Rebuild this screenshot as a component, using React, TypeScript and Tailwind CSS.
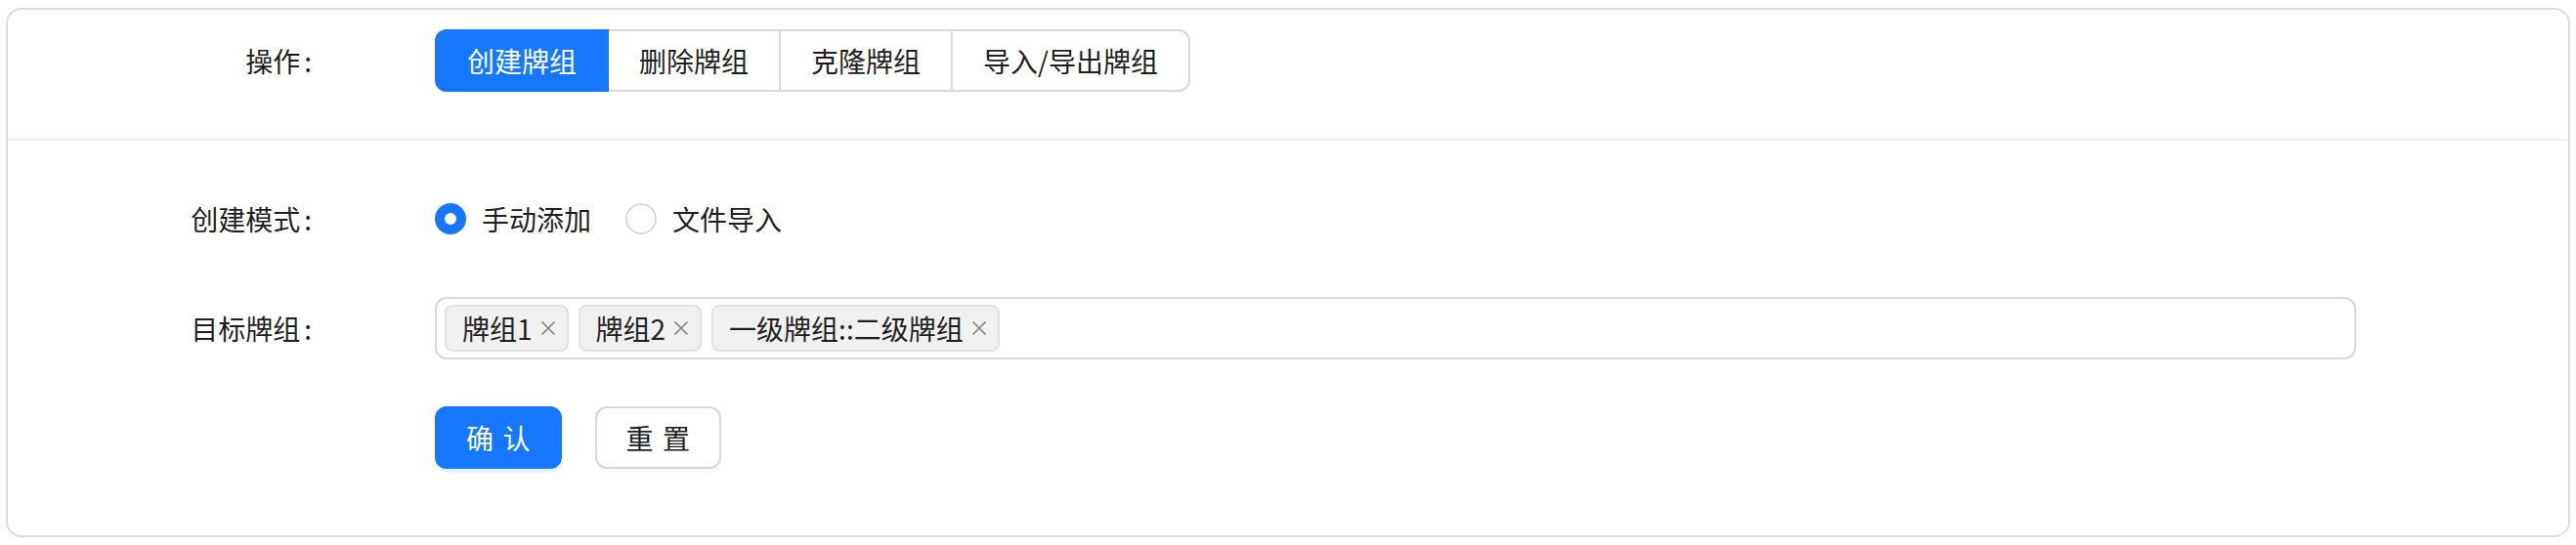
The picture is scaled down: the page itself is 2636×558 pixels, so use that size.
const font = { fontFamily: '"Noto Sans CJK SC", "Noto Sans", sans-serif' };

const ops = ["创建牌组", "删除牌组", "克隆牌组", "导入/导出牌组"];
const tags = ["牌组1", "牌组2", "一级牌组::二级牌组"];

const Label = ({ text }: { text: string }) => (
  <div className="w-[311px] shrink-0 text-right text-[#1f1f1f]">
    {text}
    <span className="ml-[4px]">:</span>
  </div>
);

const CloseIcon = () => (
  <svg width="22" height="22" viewBox="0 0 22 22" className="ml-[5px]">
    <path d="M4.5 4.5 L17.5 17.5 M17.5 4.5 L4.5 17.5" stroke="rgba(0,0,0,0.45)" strokeWidth="1.7" fill="none" />
  </svg>
);

export default function App() {
  return (
    <div className="w-[2636px] h-[558px] bg-white px-[6px] py-[8px] text-[28px] leading-[40px]" style={font}>
      <div className="h-full border-2 border-[#dddddd] rounded-[16px] flex flex-col">
        {/* 操作 */}
        <div className="pt-[20px] pb-[48px] border-b-2 border-[#f0f0f0]">
          <div className="flex items-center h-[64px]">
            <Label text="操作" />
            <div className="ml-[126px] flex">
              {ops.map((op, i) => (
                <button
                  key={op}
                  className={
                    i === 0
                      ? "h-[64px] px-[31px] whitespace-nowrap border-2 border-[#1677ff] bg-[#1677ff] text-white rounded-l-[12px] relative z-10"
                      : i === ops.length - 1
                      ? "h-[64px] px-[31px] whitespace-nowrap border-2 border-[#d9d9d9] bg-white text-[#1f1f1f] -ml-[2px] rounded-r-[12px]"
                      : "h-[64px] px-[31px] whitespace-nowrap border-2 border-[#d9d9d9] bg-white text-[#1f1f1f] -ml-[2px]"
                  }
                >
                  {op}
                </button>
              ))}
            </div>
          </div>
        </div>

        <div className="pt-[48px] flex flex-col gap-[48px]">
          {/* 创建模式 */}
          <div className="flex items-center h-[64px]">
            <Label text="创建模式" />
            <div className="ml-[126px] flex items-center">
              <label className="flex items-center mr-[19px]">
                <span className="w-[32px] h-[32px] rounded-full bg-[#1677ff] flex items-center justify-center">
                  <span className="w-[12px] h-[12px] rounded-full bg-white" />
                </span>
                <span className="px-[16px] text-[#1f1f1f]">手动添加</span>
              </label>
              <label className="flex items-center">
                <span className="w-[32px] h-[32px] rounded-full border-2 border-[#d9d9d9] bg-white" />
                <span className="px-[16px] text-[#1f1f1f]">文件导入</span>
              </label>
            </div>
          </div>

          {/* 目标牌组 */}
          <div className="flex items-center h-[64px]">
            <Label text="目标牌组" />
            <div className="ml-[126px] w-[1966px] h-[64px] border-2 border-[#d9d9d9] rounded-[12px] flex items-center pl-[8px] gap-[10px]">
              {tags.map((t) => (
                <span
                  key={t}
                  className="h-[48px] flex items-center whitespace-nowrap pl-[16px] pr-[8px] bg-[#f0f0f0] border-2 border-[#e3e3e3] rounded-[8px] text-[#1f1f1f]"
                >
                  {t}
                  <CloseIcon />
                </span>
              ))}
            </div>
          </div>

          {/* 按钮 */}
          <div className="flex items-center h-[64px] pl-[437px] gap-[34px]">
            <button className="h-[64px] px-[30px] whitespace-nowrap rounded-[12px] bg-[#1677ff] border-2 border-[#1677ff] text-white shadow-[0_4px_0_rgba(5,145,255,0.1)]">
              <span className="inline-block tracking-[0.34em] -mr-[0.34em]">确认</span>
            </button>
            <button className="h-[64px] px-[30px] whitespace-nowrap rounded-[12px] bg-white border-2 border-[#d9d9d9] text-[#1f1f1f] shadow-[0_4px_0_rgba(0,0,0,0.02)]">
              <span className="inline-block tracking-[0.34em] -mr-[0.34em]">重置</span>
            </button>
          </div>
        </div>
      </div>
    </div>
  );
}
